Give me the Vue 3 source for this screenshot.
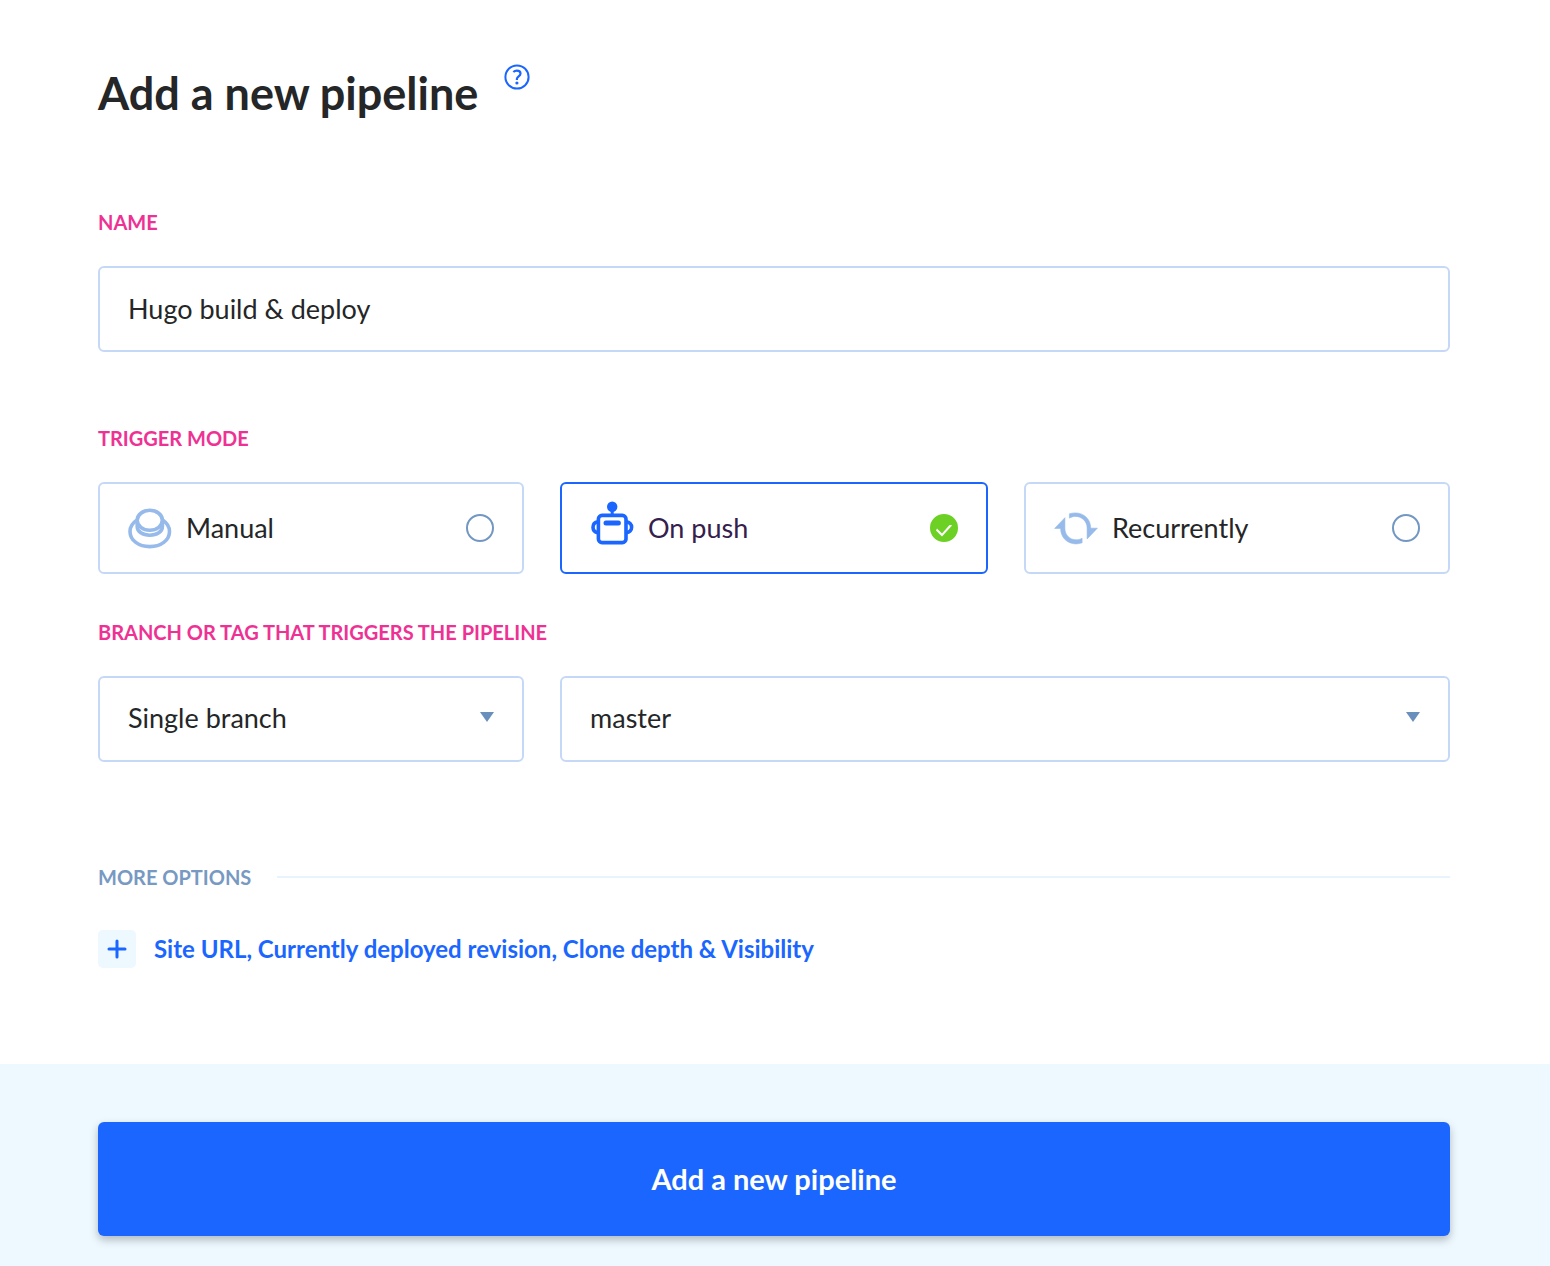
<script setup>
import { ref } from 'vue'

const name = ref('Hugo build & deploy')
const trigger = ref('push')
const refType = ref('single')
const branch = ref('master')

const modes = [
  { id: 'manual', label: 'Manual' },
  { id: 'push', label: 'On push' },
  { id: 'recurrent', label: 'Recurrently' },
]
</script>

<template>
  <form class="page" @submit.prevent>
    <main class="content">
      <header class="heading">
        <h1>Add a new pipeline</h1>
        <button type="button" class="help" aria-label="Help">
          <svg width="26" height="26" viewBox="0 0 26 26" fill="none" stroke="currentColor" stroke-width="2">
            <circle cx="13" cy="13" r="11.6" />
            <path d="M9.3 8c1-.9 2.1-1.4 3.500-1.400 2.200 0 3.700 1.200 3.700 3 0 2.700-3.600 2.900-3.600 5.400v.9" stroke-width="2.200" />
            <circle cx="12.900" cy="19" r="1.600" fill="currentColor" stroke="none" />
          </svg>
        </button>
      </header>

      <section class="group">
        <label class="caption" for="pipeline-name">NAME</label>
        <input id="pipeline-name" v-model="name" class="field" type="text" />
      </section>

      <fieldset class="group triggers">
        <legend class="caption">TRIGGER MODE</legend>
        <div class="columns">
          <label
            v-for="mode in modes"
            :key="mode.id"
            class="card"
            :class="{ active: trigger === mode.id }"
          >
            <svg v-if="mode.id === 'manual'" class="icon" viewBox="0 0 44 44" fill="none" stroke="currentColor" stroke-width="3.6">
              <ellipse cx="21.8" cy="14.3" rx="12.6" ry="10" />
              <path d="M9.2 14.5v6c0 5.2 5.4 8.8 12.6 8.8s12.6-3.6 12.6-8.8v-6" />
              <path d="M8.7 14.2C4.600 17 2 21 2 25.400c0 9 8.800 15.200 19.800 15.200s19.700-6.200 19.700-15.200c0-4.400-2.500-8.400-6.600-11.200" />
            </svg>
            <svg v-else-if="mode.id === 'push'" class="icon" viewBox="0 0 44 44" fill="none" stroke="currentColor" stroke-width="3.6">
              <circle cx="22.200" cy="0.700" r="5.200" fill="currentColor" stroke="none" />
              <path d="M22.200 4v5" stroke-width="3" />
              <rect x="8.400" y="9.400" width="27.600" height="27.200" rx="3.600" />
              <path d="M16 17h12.400" stroke-width="5" stroke-linecap="round" />
              <path d="M8 15.800c-3 .4-5 2.600-5 5.500s2 5.100 5 5.500M36.400 15.800c3 .4 5.200 2.600 5.200 5.500s-2.200 5.100-5.200 5.500" />
            </svg>
            <svg v-else class="icon" viewBox="0 0 44 44" fill="currentColor">
              <path d="M15.400 7.800C17.300 7.200 19.200 6.900 21.400 6.900c8.800 0 15.300 6.700 15.300 14.900v.4h6.700L33.100 33V21.800c0-6.500-5.300-11.400-11.700-11.400-2.200 0-4.100.6-6 1.700z" stroke="currentColor" stroke-width=".6" />
              <path d="M28.100 36.800c-1.900.7-4 1.100-6.200 1.100-8.900 0-15.300-6.800-15.300-15.400v-.1H.6L10.900 11.700v10.800c0 6.400 4.900 11.300 11.200 11.300 2.200 0 4.200-.5 6-1.600z" stroke="currentColor" stroke-width=".6" />
            </svg>
            <span class="card-label">{{ mode.label }}</span>
            <input v-model="trigger" class="radio" type="radio" name="trigger" :value="mode.id" />
          </label>
        </div>
      </fieldset>

      <section class="group branch">
        <label class="caption" for="branch-name">BRANCH OR TAG THAT TRIGGERS THE PIPELINE</label>
        <div class="columns">
          <div class="select">
            <select v-model="refType" class="field" aria-label="Branch type">
              <option value="single">Single branch</option>
            </select>
            <svg class="caret" width="14" height="10" viewBox="0 0 14 10"><path d="M0 0h14L7 10z" fill="currentColor" /></svg>
          </div>
          <div class="select wide">
            <select id="branch-name" v-model="branch" class="field">
              <option>master</option>
            </select>
            <svg class="caret" width="14" height="10" viewBox="0 0 14 10"><path d="M0 0h14L7 10z" fill="currentColor" /></svg>
          </div>
        </div>
      </section>

      <section class="more">
        <h2 class="caption">MORE OPTIONS</h2>
        <button type="button" class="expand">
          <span class="plus">
            <svg width="20" height="20" viewBox="0 0 20 20" stroke="currentColor" stroke-width="3" stroke-linecap="round">
              <path d="M10 2v16M2 10h16" />
            </svg>
          </span>
          <span>Site URL, Currently deployed revision, Clone depth &amp; Visibility</span>
        </button>
      </section>
    </main>

    <footer class="footer">
      <button type="submit" class="submit">Add a new pipeline</button>
    </footer>
  </form>
</template>

<style>
body {
  background: #fff;
}
</style>

<style scoped>
.page,
.page * {
  box-sizing: border-box;
}

.page {
  min-height: 100vh;
  display: flex;
  flex-direction: column;
  color: #242627;
  font-family: Lato, "Liberation Sans", sans-serif;
  font-size: 27px;
  line-height: 36px;
}

button,
input,
select {
  margin: 0;
  font: inherit;
  color: inherit;
}

button {
  padding: 0;
  border: 0;
  background: none;
  cursor: pointer;
}

.content {
  padding: 64px 100px 96px 98px;
}

.heading {
  display: flex;
  align-items: flex-start;
  gap: 26px;
  margin-bottom: 88px;
}

h1 {
  margin: 0;
  font-size: 45px;
  line-height: 58px;
  font-weight: 700;
}

.help {
  display: flex;
  color: #1a66ff;
}

.group {
  margin: 0 0 74px;
}

.caption {
  display: block;
  margin: 0 0 32px;
  padding: 0;
  color: #ee3294;
  font-size: 20px;
  line-height: 24px;
  font-weight: 700;
}

.field {
  display: block;
  width: 100%;
  height: 86px;
  padding: 0 28px 2px;
  border: 2px solid #c5d8f8;
  border-radius: 6px;
  background: #fff;
  appearance: none;
}

.triggers {
  min-width: 0;
  margin-bottom: 46px;
  padding: 0;
  border: 0;
}

.columns {
  display: grid;
  grid-template-columns: 213fr 214fr 213fr;
  gap: 36px;
}

.card {
  display: flex;
  align-items: center;
  gap: 14px;
  height: 92px;
  padding: 0 28px;
  border: 2px solid #c5d8f8;
  border-radius: 6px;
  cursor: pointer;
}

.card.active {
  border-color: #1a66ff;
  color: #35204c;
}

.icon {
  flex: none;
  width: 44px;
  height: 44px;
  overflow: visible;
  color: #96baea;
}

.active .icon {
  color: #1a66ff;
}

.card-label {
  flex: 1;
}

.radio {
  display: flex;
  align-items: center;
  justify-content: center;
  flex: none;
  width: 28px;
  height: 28px;
  border: 2px solid #7297c2;
  border-radius: 50%;
  appearance: none;
}

.radio:checked {
  border-color: #6cd124;
  background: #6cd124;
}

.radio:checked::before {
  content: "";
  width: 16px;
  height: 12px;
  margin-top: 5px;
  background: #fff;
  clip-path: polygon(0 6px, 1px 4px, 6px 9px, 14px 0, 16px 1px, 6px 12px);
}

.branch {
  margin-bottom: 103px;
}

.select {
  position: relative;
}

.wide {
  grid-column: span 2;
}

.caret {
  position: absolute;
  top: 36px;
  right: 30px;
  color: #698fbc;
  pointer-events: none;
}

.more .caption {
  display: flex;
  align-items: center;
  gap: 26px;
  margin-bottom: 41px;
  color: #7799c2;
}

.more .caption::after {
  content: "";
  flex: 1;
  height: 2px;
  background: #e8f3fd;
}

.expand {
  display: flex;
  align-items: center;
  gap: 18px;
  color: #1a66ff;
  font-size: 24px;
  font-weight: 700;
  text-align: left;
}

.plus {
  display: flex;
  align-items: center;
  justify-content: center;
  flex: none;
  width: 38px;
  height: 38px;
  border-radius: 5px;
  background: #edf8ff;
}

.footer {
  flex: 1;
  padding: 58px 100px 30px 98px;
  background: #edf8ff;
}

.submit {
  display: block;
  width: 100%;
  height: 114px;
  border-radius: 6px;
  background: #1a66ff;
  box-shadow: 0 4px 8px rgba(0, 0, 0, 0.25);
  color: #fff;
  font-size: 29px;
  font-weight: 700;
}
</style>
